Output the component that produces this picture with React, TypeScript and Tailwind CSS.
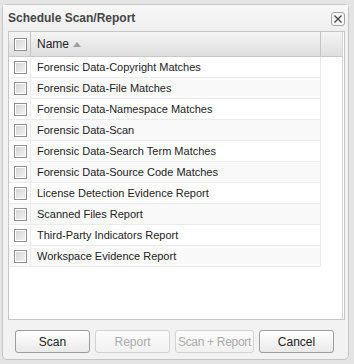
import React from "react";

const reports = [
  "Forensic Data-Copyright Matches",
  "Forensic Data-File Matches",
  "Forensic Data-Namespace Matches",
  "Forensic Data-Scan",
  "Forensic Data-Search Term Matches",
  "Forensic Data-Source Code Matches",
  "License Detection Evidence Report",
  "Scanned Files Report",
  "Third-Party Indicators Report",
  "Workspace Evidence Report",
];

const Checkbox = () => (
  <div className="w-[13px] h-[13px] border border-[#8f8f8f] bg-gradient-to-br from-[#d2d2d2] to-[#f5f5f5] shadow-[inset_0_0_0_1px_#ffffff]" />
);

const App = () => {
  const buttons = [
    { label: "Scan", disabled: false, width: "w-[75px]" },
    { label: "Report", disabled: true, width: "w-[75px]" },
    { label: "Scan + Report", disabled: true, width: "w-[79px] tracking-[-0.3px]" },
    { label: "Cancel", disabled: false, width: "w-[75px]" },
  ];

  return (
    <div className="w-[354px] h-[364px] bg-[#e4e4e4] pt-[4px] pl-[2px] overflow-hidden font-['Liberation_Sans',Arial,sans-serif]">
      <div className="w-[347px] h-[356px] rounded-[5px] border border-[#c4c4c4] bg-[#f2f2f2] flex flex-col">
        {/* title bar */}
        <div className="h-[26px] flex items-center justify-between pl-[5px] pr-[3px] bg-gradient-to-b from-[#f7f7f7] to-[#efefef]">
          <span className="text-[12px] font-bold text-[#454545]">Schedule Scan/Report</span>
          <button className="w-[14px] h-[14px] mt-[1px] rounded-[3px] border border-[#a4a4a4] bg-[#f6f6f6] flex items-center justify-center">
            <svg width="10" height="10" viewBox="0 0 10 10">
              <path d="M1.5 1.5L8.5 8.5M8.5 1.5L1.5 8.5" stroke="#444" strokeWidth="1.3" />
            </svg>
          </button>
        </div>

        {/* grid */}
        <div className="ml-[5px] w-[337px] h-[289px] border border-[#c6c6c6] bg-white pr-[1px]">
          <div className="h-full border-r border-[#d4d4d4] flex flex-col">
            <div className="h-[25px] flex border-b border-[#c8c8c8] bg-gradient-to-b from-[#f5f5f5] to-[#dedede]">
              <div className="w-[22px] border-r border-[#c4c4c4] flex items-center justify-center pl-[1px]">
                <Checkbox />
              </div>
              <div className="w-[290px] border-r border-[#c4c4c4] flex items-center pl-[6px] gap-[4px]">
                <span className="text-[12px] text-[#222]">Name</span>
                <svg width="8" height="5" viewBox="0 0 8 5" className="mt-[1px]">
                  <polygon points="0,5 4,0 8,5" fill="#a0a0a0" />
                </svg>
              </div>
              <div className="flex-1" />
            </div>
            <div className="w-[312px]">
              {reports.map((name, i) => (
                <div
                  key={name}
                  className={`h-[21px] flex border-b border-r border-[#ebebeb] ${
                    i % 2 === 1 ? "bg-[#f9f9f9]" : "bg-white"
                  }`}
                >
                  <div className="w-[22px] border-r border-[#ebebeb] flex items-center justify-center pl-[1px]">
                    <Checkbox />
                  </div>
                  <div className="flex items-center pl-[6px] text-[11px] text-[#222]">{name}</div>
                </div>
              ))}
            </div>
          </div>
        </div>

        {/* buttons */}
        <div className="mt-[10px] pl-[12px] flex gap-[5px]">
          {buttons.map((b) => (
            <button
              key={b.label}
              className={`${b.width} h-[23px] px-0 whitespace-nowrap overflow-hidden rounded-[3px] border text-[12px] bg-gradient-to-b ${
                b.disabled
                  ? "border-[#d2d2d2] text-[#ababab] from-[#fbfbfb] to-[#f1f1f1]"
                  : "border-[#9c9c9c] text-[#222] from-white to-[#e9e9e9]"
              }`}
            >
              {b.label}
            </button>
          ))}
        </div>
      </div>
    </div>
  );
};

export default App;
